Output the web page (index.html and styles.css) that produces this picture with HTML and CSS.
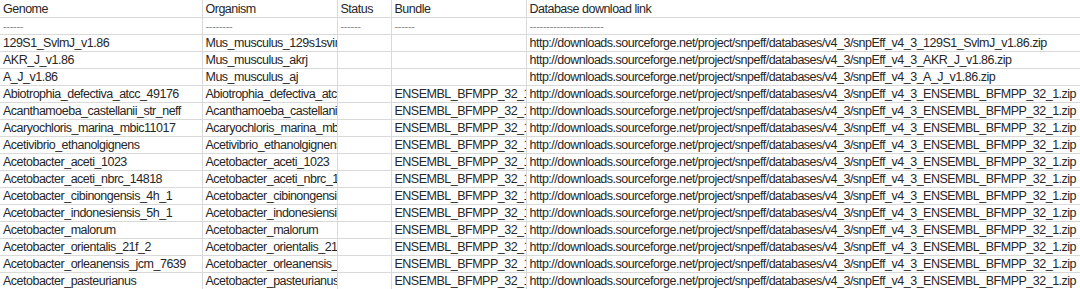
FILE: index.html
```html
<!DOCTYPE html>
<html>
<head>
<meta charset="utf-8">
<link rel="stylesheet" href="styles.css">
</head>
<body>
<table class="sheet">
<colgroup>
<col class="c-genome"><col class="c-org"><col class="c-status"><col class="c-bundle"><col class="c-link">
</colgroup>
<tbody>
<tr class="first"><td>Genome</td><td>Organism</td><td>Status</td><td>Bundle</td><td>Database download link</td></tr>
<tr class="dash"><td>------</td><td>--------</td><td>------</td><td>------</td><td>----------------------</td></tr>
<tr><td>129S1_SvlmJ_v1.86</td><td>Mus_musculus_129s1svimj</td><td></td><td></td><td>http://downloads.sourceforge.net/project/snpeff/databases/v4_3/snpEff_v4_3_129S1_SvlmJ_v1.86.zip</td></tr>
<tr><td>AKR_J_v1.86</td><td>Mus_musculus_akrj</td><td></td><td></td><td>http://downloads.sourceforge.net/project/snpeff/databases/v4_3/snpEff_v4_3_AKR_J_v1.86.zip</td></tr>
<tr><td>A_J_v1.86</td><td>Mus_musculus_aj</td><td></td><td></td><td>http://downloads.sourceforge.net/project/snpeff/databases/v4_3/snpEff_v4_3_A_J_v1.86.zip</td></tr>
<tr><td>Abiotrophia_defectiva_atcc_49176</td><td>Abiotrophia_defectiva_atcc_49176</td><td></td><td>ENSEMBL_BFMPP_32_1</td><td>http://downloads.sourceforge.net/project/snpeff/databases/v4_3/snpEff_v4_3_ENSEMBL_BFMPP_32_1.zip</td></tr>
<tr><td>Acanthamoeba_castellanii_str_neff</td><td>Acanthamoeba_castellanii_str_neff</td><td></td><td>ENSEMBL_BFMPP_32_1</td><td>http://downloads.sourceforge.net/project/snpeff/databases/v4_3/snpEff_v4_3_ENSEMBL_BFMPP_32_1.zip</td></tr>
<tr><td>Acaryochloris_marina_mbic11017</td><td>Acaryochloris_marina_mbic11017</td><td></td><td>ENSEMBL_BFMPP_32_1</td><td>http://downloads.sourceforge.net/project/snpeff/databases/v4_3/snpEff_v4_3_ENSEMBL_BFMPP_32_1.zip</td></tr>
<tr><td>Acetivibrio_ethanolgignens</td><td>Acetivibrio_ethanolgignens</td><td></td><td>ENSEMBL_BFMPP_32_1</td><td>http://downloads.sourceforge.net/project/snpeff/databases/v4_3/snpEff_v4_3_ENSEMBL_BFMPP_32_1.zip</td></tr>
<tr><td>Acetobacter_aceti_1023</td><td>Acetobacter_aceti_1023</td><td></td><td>ENSEMBL_BFMPP_32_1</td><td>http://downloads.sourceforge.net/project/snpeff/databases/v4_3/snpEff_v4_3_ENSEMBL_BFMPP_32_1.zip</td></tr>
<tr><td>Acetobacter_aceti_nbrc_14818</td><td>Acetobacter_aceti_nbrc_14818</td><td></td><td>ENSEMBL_BFMPP_32_1</td><td>http://downloads.sourceforge.net/project/snpeff/databases/v4_3/snpEff_v4_3_ENSEMBL_BFMPP_32_1.zip</td></tr>
<tr><td>Acetobacter_cibinongensis_4h_1</td><td>Acetobacter_cibinongensis_4h_1</td><td></td><td>ENSEMBL_BFMPP_32_1</td><td>http://downloads.sourceforge.net/project/snpeff/databases/v4_3/snpEff_v4_3_ENSEMBL_BFMPP_32_1.zip</td></tr>
<tr><td>Acetobacter_indonesiensis_5h_1</td><td>Acetobacter_indonesiensis_5h_1</td><td></td><td>ENSEMBL_BFMPP_32_1</td><td>http://downloads.sourceforge.net/project/snpeff/databases/v4_3/snpEff_v4_3_ENSEMBL_BFMPP_32_1.zip</td></tr>
<tr><td>Acetobacter_malorum</td><td>Acetobacter_malorum</td><td></td><td>ENSEMBL_BFMPP_32_1</td><td>http://downloads.sourceforge.net/project/snpeff/databases/v4_3/snpEff_v4_3_ENSEMBL_BFMPP_32_1.zip</td></tr>
<tr><td>Acetobacter_orientalis_21f_2</td><td>Acetobacter_orientalis_21f_2</td><td></td><td>ENSEMBL_BFMPP_32_1</td><td>http://downloads.sourceforge.net/project/snpeff/databases/v4_3/snpEff_v4_3_ENSEMBL_BFMPP_32_1.zip</td></tr>
<tr><td>Acetobacter_orleanensis_jcm_7639</td><td>Acetobacter_orleanensis_jcm_7639</td><td></td><td>ENSEMBL_BFMPP_32_1</td><td>http://downloads.sourceforge.net/project/snpeff/databases/v4_3/snpEff_v4_3_ENSEMBL_BFMPP_32_1.zip</td></tr>
<tr><td>Acetobacter_pasteurianus</td><td>Acetobacter_pasteurianus</td><td></td><td>ENSEMBL_BFMPP_32_1</td><td>http://downloads.sourceforge.net/project/snpeff/databases/v4_3/snpEff_v4_3_ENSEMBL_BFMPP_32_1.zip</td></tr>
</tbody>
</table>
</body>
</html>
```
FILE: styles.css
```css
html, body {
  margin: 0;
  padding: 0;
  background: #ffffff;
  overflow: hidden;
}
.sheet {
  border-collapse: collapse;
  table-layout: fixed;
  width: 1100px;
  font-family: "Liberation Sans", Arial, sans-serif;
  font-size: 12.5px;
  letter-spacing: -0.5px;
  color: #262626;
}
.c-genome { width: 202px; }
.c-org { width: 135px; }
.c-status { width: 54px; }
.c-bundle { width: 135px; }
.c-link { width: 574px; }
.sheet td {
  height: 17px;
  padding: 0 0 0 3px;
  box-sizing: border-box;
  border-right: 1px solid #d9d9d9;
  border-bottom: 1px solid #d9d9d9;
  white-space: nowrap;
  overflow: hidden;
  text-overflow: clip;
  vertical-align: bottom;
  line-height: 16px;
}
.sheet td:last-child { border-right: none; }
.sheet tr.dash td { color: #8a8a8a; font-size: 11px; letter-spacing: -0.3px; }
```
